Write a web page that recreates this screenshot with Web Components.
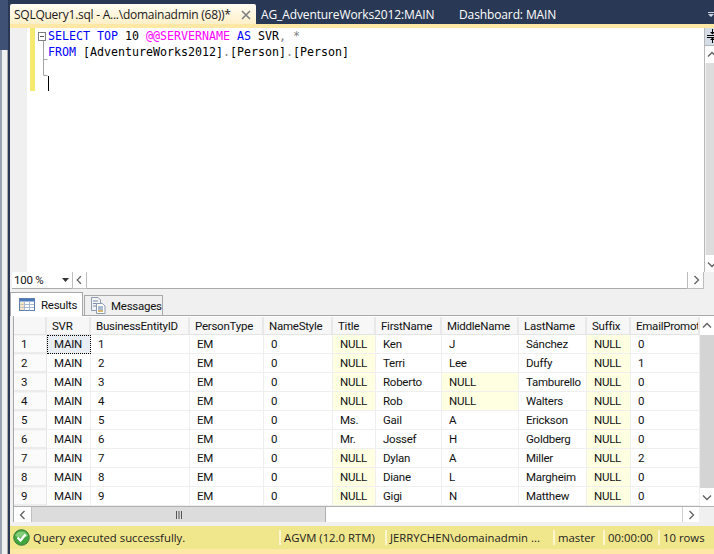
<!DOCTYPE html>
<html><head><meta charset="utf-8"><title>SSMS</title>
<style>
html,body{margin:0;padding:0;width:714px;height:554px;overflow:hidden;background:#293955;font-family:"Open Sans","Noto Sans",sans-serif;font-size:12px;}
</style></head><body>
<ssms-app></ssms-app>
<script>
function def(name, css, html, extra){
  customElements.define(name, class extends HTMLElement{
    constructor(){super();const s=this.attachShadow({mode:'open'});
      s.innerHTML='<style>'+css+'</style>'+(typeof html==='function'?html(this):html);}
    connectedCallback(){ if(extra) extra.call(this,this.shadowRoot); }
  });
}
const UI='font-family:Roboto,"Open Sans",sans-serif;font-size:11.5px;letter-spacing:-.25px;';
const arrows={
 up:'<path d="M3 8.5 L7 4.5 L11 8.5" />',
 down:'<path d="M3 5.5 L7 9.5 L11 5.5" />',
 left:'<path d="M8.5 3 L4.5 7 L8.5 11" />',
 right:'<path d="M5.5 3 L9.5 7 L5.5 11" />'
};
def('scroll-btn',
 ':host{display:flex;align-items:center;justify-content:center;background:#fff;box-sizing:border-box;flex:none}svg{display:block;fill:none;stroke:#606060;stroke-width:1.3}',
 '<svg width="14" height="14" viewBox="0 0 14 14"></svg>',
 function(s){s.querySelector('svg').innerHTML=arrows[this.getAttribute('dir')];});

def('doc-tabs',
 `:host{display:flex;height:24px;background:#293955;color:#fff;align-items:stretch;position:relative;font-size:12px;letter-spacing:-.12px}
  .active{width:246px;box-sizing:border-box;background:linear-gradient(#fffcf4,#fff0c8);color:#1a1a1a;border-radius:2px 2px 0 0;display:flex;align-items:center;padding:1px 5px 0 4px;justify-content:space-between;white-space:nowrap;margin-top:4px;letter-spacing:-.25px}
  .t{display:flex;align-items:center;padding-top:4px;white-space:nowrap;color:#fff}
  .t1{padding-left:5px;width:198px}
  svg{display:block;flex:none}
  .drop{margin-left:auto;padding-top:12px}`,
 `<div class="active"><span>SQLQuery1.sql - A...\\domainadmin (68))*</span><svg width="10" height="10" viewBox="0 0 10 10"><path d="M1 1L9 9M9 1L1 9" stroke="#7d7f80" stroke-width="1.6"/></svg></div>
  <div class="t t1">AG_AdventureWorks2012:MAIN</div><div class="t">Dashboard: MAIN</div>
  <div class="drop"><svg width="6" height="6" viewBox="0 0 6 6"><path d="M0 1H6V0H0ZM0 2H6L3 5Z" fill="#cfd6e4"/></svg></div>`);

def('sql-editor',
 `:host{display:flex;flex:1;min-height:0;background:#fff;position:relative}
  .gut{width:17px;background:#f0f0f0;flex:none}
  .pad{width:3px;flex:none}
  .mod{width:5px;height:63px;background:#f5e96f;flex:none}
  .fold{width:13px;flex:none}
  .code{flex:1;font-family:"DejaVu Sans Mono",monospace;font-size:11.63px;line-height:16px;color:#000;white-space:pre;font-weight:400}
  .code div{height:16px}
  .k{color:#0000ff}.m{color:#ff00ff}.g{color:#808080}
  .caret{display:block;width:1px;height:15px;background:#000;margin-top:0}
  .sb{width:10px;flex:none;overflow:hidden;border-left:1px solid #b8b8b8;box-sizing:border-box;display:flex;flex-direction:column;background:#f0f0f0}
  .split{height:17px;flex:none;background:#d5dde8;border-bottom:1px solid #b5b5b5;overflow:hidden}
  .thumb{flex:1;background:#dcdcdc;margin-left:1px}
  scroll-btn{width:17px;height:17px;justify-content:flex-start}
  svg{display:block}`,
 `<div class="gut"></div><div class="pad"></div><div class="mod"></div>
  <div class="fold"><svg width="13" height="64" viewBox="0 0 13 64"><rect x="3.5" y="4.5" width="7" height="8" fill="#fff" stroke="#808080"/><path d="M5 8.5H9" stroke="#555"/><path d="M8.5 13V47.5H12.5M8.5 31.5H12.5" fill="none" stroke="#a5a5a5"/></svg></div>
  <div class="code"><div><span class="k">SELECT</span> <span class="k">TOP</span> 10 <span class="m">@@SERVERNAME</span> <span class="k">AS</span> SVR<span class="g">,</span> <span class="g">*</span></div><div><span class="k">FROM</span> [AdventureWorks2012]<span class="g">.</span>[Person]<span class="g">.</span>[Person]</div><div></div><div><span class="caret"></span></div></div>
  <div class="sb"><div class="split"><svg width="14" height="16" viewBox="0 0 14 16"><path d="M2 7.5H14M2 9.5H14M7.5 1V5.5M7.5 11V15" fill="none" stroke="#000"/><path d="M5 4H10L7.5 6.5ZM5 12H10L7.5 9.5Z" fill="#000"/></svg></div><scroll-btn dir="up"></scroll-btn><div class="thumb"></div><scroll-btn dir="down"></scroll-btn></div>`);

def('zoom-bar',
 `:host{display:flex;height:17px;background:#f0f0f0;flex:none;${UI}}
  .combo{width:60px;margin-left:2px;background:#fff;box-sizing:border-box;display:flex;align-items:center;justify-content:space-between;padding:0 3px 0 2px;color:#111;border-bottom:1px solid #ababab}
  .left{width:15px;border:1px solid #bdbdbd;border-width:0 1px 1px 1px}
  .track{flex:1;background:#fff;border-bottom:1px solid #ababab}
  .right{width:17px;border:1px solid #bdbdbd;border-width:0 1px 1px 1px}
  .end{width:10px;background:#f0f0f0}
  scroll-btn{height:17px}
  svg{display:block}`,
 `<div class="combo"><span>100 %</span><svg width="7" height="4" viewBox="0 0 7 4"><path d="M0 0H7L3.5 4Z" fill="#333"/></svg></div><scroll-btn class="left" dir="left"></scroll-btn><div class="track"></div><scroll-btn class="right" dir="right"></scroll-btn><div class="end"></div>`);

def('result-tabs',
 `:host{display:flex;height:27px;background:#f0f0f0;align-items:flex-end;flex:none;box-sizing:border-box;border-bottom:1px solid #a8a8a8;color:#111;${UI}}
  .tab{display:flex;align-items:center;box-sizing:border-box;white-space:nowrap}
  .r{width:73px;height:24px;margin-bottom:-1px;background:#fff;border:1px solid #a8a8a8;border-bottom:0;padding-left:8px;gap:6px}
  .m{width:79px;height:20px;margin-left:1px;background:#f0f0f0;border:1px solid #a8a8a8;border-bottom:0;padding-left:5px;gap:5px}
  svg{display:block;flex:none}`,
 `<div class="tab r"><svg width="16" height="13" viewBox="0 0 16 13"><rect x=".5" y=".5" width="15" height="12" fill="#fff" stroke="#5b7fae"/><rect x="1" y="1" width="14" height="2.5" fill="#4c79b8"/><path d="M1 6.5H15M1 9.5H15M5.5 3.5V12.5M10.5 3.5V12.5" stroke="#a9b9cf"/><rect x="1" y="4" width="4" height="8" fill="#e8cfa0" opacity=".55"/></svg><span>Results</span></div>
  <div class="tab m"><svg width="16" height="17" viewBox="0 0 16 17"><path d="M1.5.5H8L10.5 3V13.5H1.5Z" fill="#f4f4f4" stroke="#8c9ab0"/><path d="M3 4H8M3 6.5H9M3 9H9" stroke="#7b8da8"/><path d="M6.5 6.5H12.5L15 9V16.5H6.5Z" fill="#fff" stroke="#8c9ab0"/><path d="M8 10H13M8 12H13" stroke="#5677a8"/><path d="M8 14H13" stroke="#c9962e" stroke-width="1.4"/></svg><span>Messages</span></div>`);

const cols=['SVR','BusinessEntityID','PersonType','NameStyle','Title','FirstName','MiddleName','LastName','Suffix','EmailPromotion'];
const rows=[
['MAIN','1','EM','0','NULL','Ken','J','Sánchez','NULL','0'],
['MAIN','2','EM','0','NULL','Terri','Lee','Duffy','NULL','1'],
['MAIN','3','EM','0','NULL','Roberto','NULL','Tamburello','NULL','0'],
['MAIN','4','EM','0','NULL','Rob','NULL','Walters','NULL','0'],
['MAIN','5','EM','0','Ms.','Gail','A','Erickson','NULL','0'],
['MAIN','6','EM','0','Mr.','Jossef','H','Goldberg','NULL','0'],
['MAIN','7','EM','0','NULL','Dylan','A','Miller','NULL','2'],
['MAIN','8','EM','0','NULL','Diane','L','Margheim','NULL','0'],
['MAIN','9','EM','0','NULL','Gigi','N','Matthew','NULL','0']];
function gridHtml(){
 let h='<div class="c h"></div>'+cols.map(c=>`<div class="c h">${c}</div>`).join('');
 rows.forEach((r,i)=>{
  h+=`<div class="c rh">${i+1}</div>`;
  r.forEach((v,j)=>{
   let cl='c d'; if(v==='NULL')cl+=' n'; if(i===0&&j===0)cl+=' sel';
   h+=`<div class="${cl}">${v}</div>`;
  });
 });
 return `<div class="main"><div class="g">${h}</div><div class="vs"><scroll-btn dir="up"></scroll-btn><div class="vt"></div><scroll-btn dir="down"></scroll-btn></div></div>
 <div class="hs"><scroll-btn dir="left"></scroll-btn><div class="thumb"><svg width="8" height="8" viewBox="0 0 8 8"><path d="M1.5 0V8M4 0V8M6.5 0V8" stroke="#555"/></svg></div><div class="rest"></div><scroll-btn dir="right" class="rb"></scroll-btn><div class="corner"></div></div>`;
}
def('results-grid',
 `:host{display:flex;flex-direction:column;height:206px;flex:none;margin-left:3px;background:#fff;border-left:1px solid #a8a8a8;box-sizing:border-box;padding-top:1px;color:#111;${UI}}
  .main{display:flex;flex:1;min-height:0}
  .g{width:686px;flex:none;display:grid;grid-template-columns:33px 44px 99px 74px 69px 43px 66px 77px 68px 44px 69px;grid-template-rows:18px repeat(9,19px);overflow:hidden}
  .c{box-sizing:border-box;white-space:nowrap;overflow:hidden;display:flex;align-items:center;line-height:18px}
  .h{background:#f7f7f7;border-right:2px solid #e8e8e8;border-bottom:1px solid #e4e4e4;padding-left:5px}
  .rh{background:#fbfbfb;border-right:1px solid #e4e4e4;border-bottom:2px solid #ececec;padding-left:7px;border-top:1px solid #f4f4f4}
  .d{padding-left:7px;border-right:1px solid #efefef;border-bottom:1px solid #efefef}
  .n{background:#ffffe1}
  .sel{background:#e8eef4;outline:1px dotted #000;outline-offset:-1px}
  .vs{width:14px;flex:none;display:flex;flex-direction:column;background:#d4d4d4;overflow:hidden}
  .vs scroll-btn{height:18px;width:14px}
  .vt{flex:1}
  .hs{height:16px;flex:none;display:flex;border-top:1px solid #b0b0b0;box-sizing:border-box;background:#fff}
  .hs scroll-btn{width:17px}
  .thumb{width:295px;background:#dcdcdc;display:flex;align-items:center;justify-content:center;border-left:1px solid #c0c0c0;border-right:1px solid #b0b0b0;box-sizing:border-box}
  .rest{flex:1}
  .rb{border-left:1px solid #d0d0d0}
  .corner{width:15px;background:#f0f0f0}
  svg{display:block}`,
 gridHtml());

def('status-bar',
 `:host{display:flex;flex-direction:column;flex:none}
  .bar{height:23px;background:#f0e68c;display:flex;align-items:center;color:#1c1c1c;white-space:nowrap;font-size:11.3px;letter-spacing:.02px}
  .msg{width:269px;display:flex;align-items:center;gap:3px;padding-left:3px;box-sizing:border-box}
  .s{box-sizing:border-box;height:15px;line-height:15px;border-left:2px solid #fbf6cd;padding-left:3px;flex:none}
  .gold{height:5px;background:#ffe8a6}
  svg{display:block;flex:none}`,
 `<div class="bar"><div class="msg"><svg width="17" height="17" viewBox="0 0 17 17"><circle cx="8.5" cy="8.5" r="7.8" fill="#3fa53f" stroke="#3c7d3c"/><path d="M2 7A7 7 0 0 1 15 7Q8.5 10 2 7Z" fill="#9cdc8e" opacity=".75"/><path d="M4.5 8.5L7.5 11.5L12.5 5.5" fill="none" stroke="#fff" stroke-width="2.2"/></svg><span>Query executed successfully.</span></div>
  <div class="s" style="width:106px">AGVM (12.0 RTM)</div><div class="s" style="width:168px">JERRYCHEN\\domainadmin ...</div><div class="s" style="width:50px">master</div><div class="s" style="width:55px">00:00:00</div><div class="s" style="width:46px">10 rows</div></div><div class="gold"></div>`);

def('ssms-app',
 `:host{display:flex;width:714px;height:554px;background:#293955;overflow:hidden}
  .rail{width:8px;flex:none;display:flex;flex-direction:column}
  .rail .a{height:50px;background:#3f5175}
  .rail .b{flex:1;background:#f0f0f0;border-right:1px solid #a8a8a8;border-left:2px solid #9aa3b2;box-sizing:border-box}
  .main{margin-left:2px;flex:1;min-width:0;display:flex;flex-direction:column}
  .gold{height:4px;background:#ffe8a6;flex:none}
  .lower{background:#f0f0f0;padding-bottom:4px;flex:none}`,
 `<div class="rail"><div class="a"></div><div class="b"></div></div>
  <div class="main"><doc-tabs></doc-tabs><div class="gold"></div><sql-editor></sql-editor><zoom-bar></zoom-bar><div class="lower"><result-tabs></result-tabs><results-grid></results-grid></div><status-bar></status-bar></div>`);
</script>
</body></html>
